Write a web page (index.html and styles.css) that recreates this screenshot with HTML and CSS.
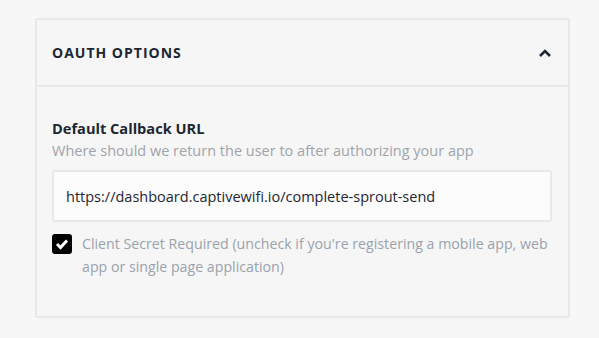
FILE: index.html
```html
<!DOCTYPE html>
<html lang="en">
<head>
<meta charset="utf-8">
<title>OAuth Options</title>
<link rel="stylesheet" href="styles.css">
</head>
<body>
<div class="panel">
  <div class="panel-head">
    <h4>OAuth Options</h4>
    <svg class="chevron" width="14" height="10" viewBox="0 0 14 10"><path d="M2 8 L7 3 L12 8" fill="none" stroke="#1d2733" stroke-width="2.6"/></svg>
  </div>
  <div class="panel-body">
    <label class="field-label">Default Callback URL</label>
    <p class="hint">Where should we return the user to after authorizing your app</p>
    <div class="input">https://dashboard.captivewifi.io/complete-sprout-send</div>
    <div class="check-row">
      <span class="box"><svg width="14" height="12" viewBox="0 0 14 12"><path d="M2 6 L5.5 9.5 L12 2.5" fill="none" stroke="#fff" stroke-width="3"/></svg></span>
      <span class="check-text">Client Secret Required (uncheck if you're registering a mobile app, web app or single page application)</span>
    </div>
  </div>
</div>
</body>
</html>
```

FILE: styles.css
```css
body { margin: 0; background: #f7f7f7; font-family: "Open Sans", "Noto Sans", sans-serif; color: #1d2733; }
.panel { margin: 18px 29px 0 35px; border: 2px solid #e8e8e8; border-radius: 3px; background: #f6f6f6; height: 300px; box-sizing: border-box; }
.panel-head { display: flex; align-items: center; justify-content: space-between; height: 65px; padding: 0 16px 0 15px; border-bottom: 2px solid #e8e8e8; }
.panel-head h4 { margin: 0; font-size: 14px; font-weight: 700; letter-spacing: 1px; text-transform: uppercase; }
.chevron { display: block; }
.panel-body { padding: 30px 15px 0 15px; }
.field-label { display: block; font-size: 14.6px; font-weight: 700; line-height: 22px; }
.hint { margin: 2px 0 9px; font-size: 14.5px; color: #a0a4aa; line-height: 20px; }
.input { width: 500px; height: 52px; box-sizing: border-box; background: #fcfcfc; border: 2px solid #e8e8e8; border-radius: 3px; padding: 0 12px; display: flex; align-items: center; font-size: 14.5px; }
.check-row { display: flex; align-items: flex-start; gap: 10px; margin-top: 12px; }
.box { flex: none; width: 20px; height: 20px; border-radius: 3px; background: #000; display: flex; align-items: center; justify-content: center; }
.check-text { font-size: 14.2px; color: #9aa2ad; line-height: 23px; margin-top: -2px; }
```
